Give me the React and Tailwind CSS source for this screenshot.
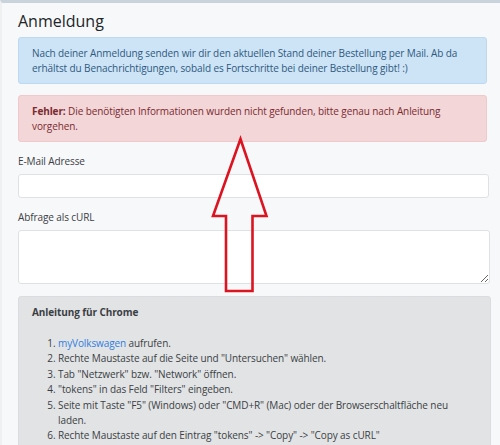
export default function App() {
  const font = { fontFamily: '"Open Sans", "Noto Sans", sans-serif' };
  return (
    <div
      className="relative w-[500px] h-[445px] overflow-hidden bg-[#f7f8f9] border-t-[3px] border-t-[#c9d3dc] border-l-[2px] border-l-[#eef0f2] text-[10px] leading-[15px] tracking-[-0.1px] text-[#212529]"
      style={font}
    >
      <div className="pl-[16px] pr-[10px]">
        <h3 className="text-[16px] leading-[21px] font-normal tracking-normal text-[#212529] pt-[8px] mb-[5px]">Anmeldung</h3>

        <div className="rounded-[3px] border border-[#bcd9f1] bg-[#cde3f6] text-[#2d5a80] px-[13px] py-[7.5px] w-[469px]">
          Nach deiner Anmeldung senden wir dir den aktuellen Stand deiner Bestellung per Mail. Ab da erhältst du Benachrichtigungen, sobald es Fortschritte bei deiner Bestellung gibt! :)
        </div>

        <div className="mt-[11px] rounded-[3px] border border-[#efc9cc] bg-[#f3d6d7] text-[#7a2a31] px-[13px] py-[7.5px] w-[469px]">
          <b className="font-bold">Fehler:</b> Die benötigten Informationen wurden nicht gefunden, bitte genau nach Anleitung vorgehen.
        </div>

        <label className="block mt-[12px] text-[#3b4045]">E-Mail Adresse</label>
        <input
          type="text"
          className="block mt-[5px] w-[471px] h-[24px] rounded-[3px] border border-[#dfe2e5] bg-white outline-none"
        />

        <label className="block mt-[11.5px] text-[#3b4045]">Abfrage als cURL</label>
        <textarea className="block mt-[5.5px] w-[472px] h-[54px] rounded-[3px] border border-[#dfe2e5] bg-white outline-none" />

        <div className="mt-[12px] w-[473px] h-[200px] rounded-[3px] border border-[#dadcdf] bg-[#e2e3e5] text-[#3a3f44] px-[13px] pt-[8px]">
          <div className="font-bold">Anleitung für Chrome</div>
          <ol className="list-decimal list-outside pl-[26px] mt-[16px] leading-[15.4px]">
            <li>
              <span className="text-[#2f7ee0]">myVolkswagen</span> aufrufen.
            </li>
            <li>Rechte Maustaste auf die Seite und "Untersuchen" wählen.</li>
            <li>Tab "Netzwerk" bzw. "Network" öffnen.</li>
            <li>"tokens" in das Feld "Filters" eingeben.</li>
            <li>Seite mit Taste "F5" (Windows) oder "CMD+R" (Mac) oder der Browserschaltfläche neu laden.</li>
            <li>Rechte Maustaste auf den Eintrag "tokens" -&gt; "Copy" -&gt; "Copy as cURL"</li>
          </ol>
        </div>
      </div>

      <svg className="absolute left-0 top-0 pointer-events-none" width="500" height="445" viewBox="0 0 500 445">
        <polygon
          points="238.5,136 211,213 224,213 224,288 250.5,288 250.5,213 264.5,213"
          fill="none"
          stroke="#dc1421"
          strokeWidth="2.6"
          strokeLinejoin="miter"
        />
      </svg>
    </div>
  );
}
